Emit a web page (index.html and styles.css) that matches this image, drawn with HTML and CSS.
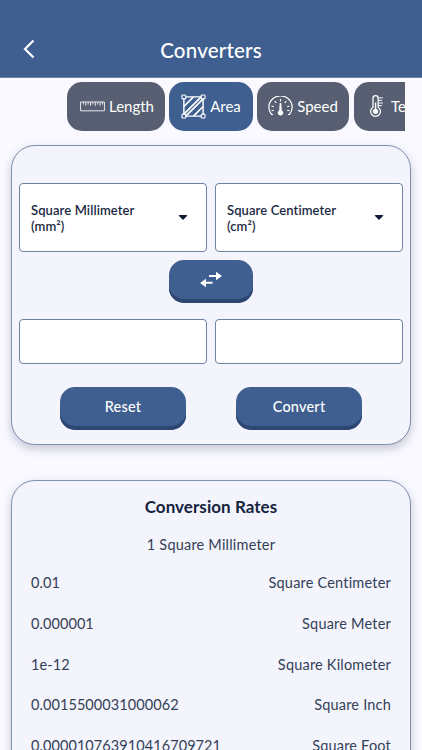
FILE: index.html
```html
<!DOCTYPE html>
<html lang="en">
<head>
<meta charset="utf-8">
<title>Converters</title>
<link rel="stylesheet" href="styles.css">
</head>
<body>
<header class="topbar">
  <svg class="back" width="14" height="20" viewBox="0 0 14 20"><path d="M11.500 1.500 L3 10 L11.500 18.500" fill="none" stroke="#fff" stroke-width="2.200"/></svg>
  <h1 class="title">Converters</h1>
</header>
<nav class="tabs">
  <div class="tab tab-length">
    <svg width="25" height="11" viewBox="0 0 26 11"><path d="M.6.8H25.4V10H.6Z M3.5 1V3.5 M6 1V4.800 M8.5 1V3.5 M11 1V4.800 M13.5 1V3.5 M16 1V4.800 M18.5 1V3.5 M21 1V4.800 M23.5 1V3.5" fill="none" stroke="#fff" stroke-width=".9"/></svg>
    <span>Length</span>
  </div>
  <div class="tab tab-area active">
    <svg width="25" height="25" viewBox="0 0 26 26"><path d="M3 3H23V23H3Z" fill="none" stroke="#fff" stroke-width="1.500"/><path d="M3 13L13 3 M3 21L21 3 M5 23L23 5 M13 23L23 13" stroke="#fff" stroke-width="1.700" fill="none"/><g fill="#3F5F91" stroke="#fff" stroke-width="1.200"><rect x="1" y="1" width="4" height="4" rx="1"/><rect x="21" y="1" width="4" height="4" rx="1"/><rect x="1" y="21" width="4" height="4" rx="1"/><rect x="21" y="21" width="4" height="4" rx="1"/></g></svg>
    <span>Area</span>
  </div>
  <div class="tab tab-speed">
    <svg width="25" height="20" viewBox="0 0 25 20"><path d="M5 18.500H3.600A11.600 11.600 0 0 1 .8 11.500 11.700 11.700 0 0 1 24.200 11.500 11.600 11.600 0 0 1 21.400 18.500H20" fill="none" stroke="#fff" stroke-width="1.200"/><path d="M12.500 3V5.500M6.800 5L8.300 7M18.200 5L16.700 7M3.500 10L5.800 10.800M21.500 10L19.200 10.800M3.500 14.500H5.800M21.500 14.500H19.200" stroke="#fff" stroke-width="1.200" fill="none"/><path d="M11.700 7H13.300L13.800 14.500A2.700 2.700 0 1 1 11.200 14.500Z" fill="#fff"/></svg>
    <span>Speed</span>
  </div>
  <div class="tab tab-temp">
    <svg width="15" height="24" viewBox="0 0 15 24"><path d="M3.500 3A3 3 0 0 1 9.500 3V13.500A5.700 5.700 0 1 1 3.500 13.500Z" fill="none" stroke="#fff" stroke-width="1.500"/><circle cx="6.500" cy="18.200" r="3.100" fill="#fff"/><path d="M6.500 8V18" stroke="#fff" stroke-width="1.600"/><path d="M10 2.500H15M10 5.500H14M10 8.500H15M10 11.500H14" stroke="#fff" stroke-width="1.100"/></svg>
    <span>Temperature</span>
  </div>
</nav>
<main class="content">
  <section class="card converter">
    <div class="pair">
      <div class="select"><span>Square Millimeter (mm²)</span><i class="caret"></i></div>
      <div class="select"><span>Square Centimeter (cm²)</span><i class="caret"></i></div>
    </div>
    <div class="btn swap">
      <svg width="24" height="17" viewBox="0 0 24 17"><path d="M5 11.800H13.500M18 5H10" fill="none" stroke="#fff" stroke-width="2"/><path d="M23 5L17 .8V9.200Z M1 12L7 7.800V16.200Z" fill="#fff"/></svg>
    </div>
    <div class="pair">
      <div class="field"></div>
      <div class="field"></div>
    </div>
    <div class="actions">
      <div class="btn action">Reset</div>
      <div class="btn action">Convert</div>
    </div>
  </section>
  <section class="card rates">
    <h2 class="rates-title">Conversion Rates</h2>
    <p class="rates-base">1 Square Millimeter</p>
    <div class="rate"><span class="num">0.01</span><span>Square Centimeter</span></div>
    <div class="rate"><span class="num">0.000001</span><span>Square Meter</span></div>
    <div class="rate"><span class="num">1e-12</span><span>Square Kilometer</span></div>
    <div class="rate"><span class="num">0.0015500031000062</span><span>Square Inch</span></div>
    <div class="rate"><span class="num">0.000010763910416709721</span><span>Square Foot</span></div>
  </section>
</main>
</body>
</html>
```

FILE: styles.css
```css
* { box-sizing: border-box; }
html, body { margin: 0; height: 100%; }
body {
  width: 422px;
  height: 750px;
  overflow: hidden;
  background: #F9F9FF;
  font-family: Lato, "Open Sans", sans-serif;
  color: #1B2A44;
}
.topbar {
  height: 78px;
  background: #3F5F91;
  border-bottom: 1px solid #6F88AE;
  padding-top: 40px;
  display: flex;
  justify-content: center;
  position: relative;
}
.back { position: absolute; left: 22px; top: 39px; }
.title {
  margin: 0;
  font-size: 20.500px;
  line-height: 20px;
  font-weight: 500;
  color: #fff;
  letter-spacing: .2px;
}
.tabs {
  display: flex;
  gap: 4px;
  margin: 4px 0 0 67px;
  width: 338px;
  height: 49px;
  overflow: hidden;
}
.tab {
  flex: none;
  height: 49px;
  border-radius: 15px;
  background: #585F72;
  color: #fff;
  display: flex;
  align-items: center;
  justify-content: center;
  gap: 4px;
  font-size: 15px;
  line-height: 15px;
  padding-bottom: 1px;
}
.tab.active { background: #3F5F91; }
.tab-length { width: 98px; padding-left: 2px; }
.tab-area { width: 84px; }
.tab-speed { width: 92px; }
.tab-temp { width: 120px; margin-left: 1px; justify-content: flex-start; padding-left: 16px; gap: 8px; }
.content { padding: 14px 11px 0; display: flex; flex-direction: column; gap: 35px; }
.card {
  background: #F3F4FC;
  border: 1px solid #7F90B0;
  border-radius: 24px;
  box-shadow: 0 4px 10px rgba(60, 70, 100, .28);
}
.converter { height: 300px; padding: 37px 7px 0; }
.pair { display: flex; gap: 8px; }
.select, .field {
  flex: 1;
  background: #fff;
  border: 1px solid #6E82A6;
  border-radius: 4px;
}
.select {
  height: 69px;
  display: flex;
  align-items: center;
  justify-content: space-between;
  padding: 0 18px 0 11px;
  font-size: 13px;
  line-height: 16.500px;
  font-weight: 600;
  color: #1B2A44;
  letter-spacing: .1px;
}
.select span { width: 125px; padding-top: 1px; }
.caret {
  width: 0;
  height: 0;
  border-left: 5px solid transparent;
  border-right: 5px solid transparent;
  border-top: 5px solid #0E1A33;
  border-radius: 2px;
}
.field { height: 45px; }
.btn {
  background: #3F5F91;
  color: #fff;
  border-radius: 15px;
  box-shadow: inset 0 -4px 0 #2E4672;
  display: flex;
  align-items: center;
  justify-content: center;
}
.swap { width: 84px; height: 43px; margin: 8px auto 16px; padding-bottom: 4px; }
.actions { display: flex; justify-content: center; gap: 50px; margin-top: 23px; }
.action { width: 126px; height: 43px; font-size: 14.500px; font-weight: 500; padding-bottom: 4px; letter-spacing: .2px; }
.rates { height: 320px; padding: 15px 19px 0; }
.rates-title {
  margin: 0;
  text-align: center;
  font-size: 17px;
  line-height: 21px;
  font-weight: 700;
  letter-spacing: .05px;
  color: #15233F;
}
.rates-base {
  margin: 19px 0 0;
  text-align: center;
  font-size: 14.500px;
  line-height: 18px;
  color: #333F57;
  letter-spacing: .2px;
}
.rate {
  display: flex;
  justify-content: space-between;
  font-size: 14.500px;
  line-height: 18px;
  margin-top: 22.800px;
  color: #333F57;
  letter-spacing: .2px;
}
.num { letter-spacing: .07px; }
.rates-base + .rate { margin-top: 20px; }
```
